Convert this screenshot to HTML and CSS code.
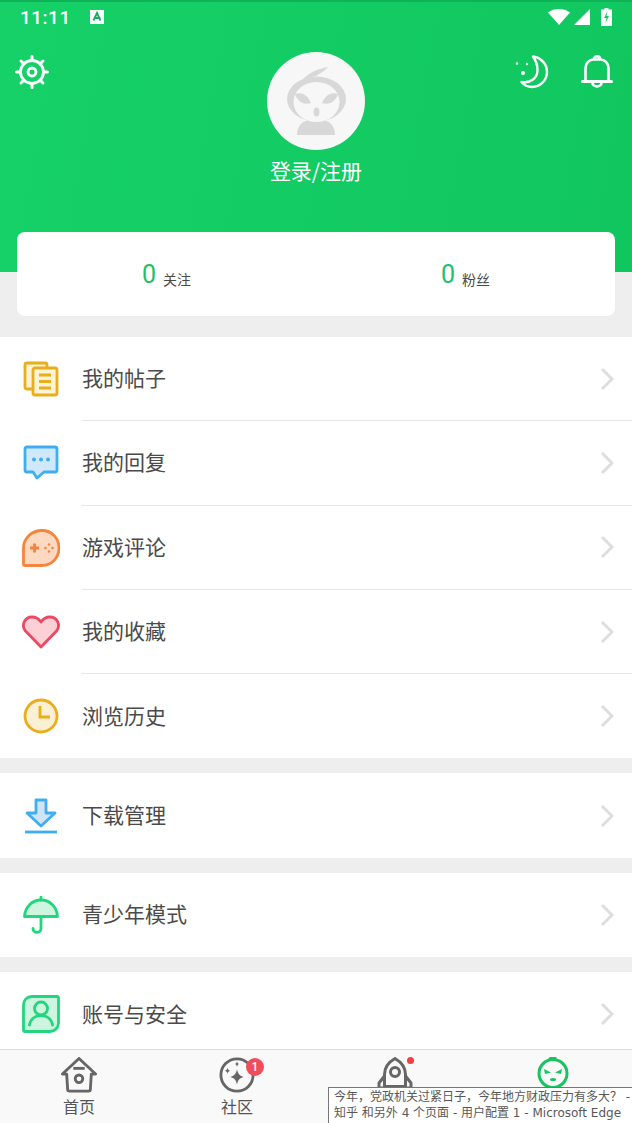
FILE: index.html
```html
<!DOCTYPE html>
<html lang="zh">
<head>
	<meta charset="utf-8">
	<title>我的</title>
	<link rel="stylesheet" href="styles.css">
</head>
<body>
	<div class="phone">
		<div class="scroll">
			<div class="top">
				<div class="status">
					<span class="time">11:11</span>
					<svg class="status-a" width="14" height="14" viewBox="0 0 14 14"><rect width="14" height="14" fill="#fff"/><path d="M3.500 10.500 7 3l3.500 7.500M5 8h4" fill="none" stroke="#18a860" stroke-width="1.800"/></svg>
					<span class="status-gap"></span>
					<svg width="22" height="16" viewBox="0 0 22 16"><path d="M0 3.500C3 1 7 0 11 0s8 1 11 3.500L11 16z" fill="#fff"/></svg>
					<svg class="status-signal" width="16" height="16" viewBox="0 0 16 16"><path d="M16 0v16H0z" fill="#fff"/></svg>
					<svg class="status-batt" width="11" height="18" viewBox="0 0 11 18"><path d="M3.500 0h4v1.500H11V18H0V1.500h3.500z" fill="#fff"/><path d="M6.500 3 3 10h2.500L4.500 15 8 8H5.500z" fill="#15cc63"/></svg>
				</div>
				<div class="tools">
					<svg class="gear" width="34" height="34" viewBox="0 0 34 34" fill="none" stroke="#fff">
						<circle cx="17" cy="17" r="11.500" stroke-width="2.800"/>
						<circle cx="17" cy="17" r="4" stroke-width="2.800"/>
						<path d="M17 1.500v4M17 28.500v4M1.500 17h4M28.500 17h4M6 6l3 3M25 25l3 3M28 6l-3 3M9 25l-3 3" stroke-width="3" stroke-linecap="round"/>
					</svg>
					<div class="tools-right">
						<svg width="34" height="34" viewBox="0 0 34 34" fill="none" stroke="#fff" stroke-width="2.400">
							<path d="M18 1.500c8 1 14 7.500 14 15.500 0 8.500-7 15-15 15-4.500 0-8-2-10.500-5 9.500 1.500 16-4 16-12 0-5-2-10-4.500-13.500z" stroke-linejoin="round"/>
							<circle cx="8" cy="18" r="2" fill="#fff" stroke="none"/>
							<circle cx="2" cy="8.500" r="1.200" fill="#fff" stroke="none"/>
							<circle cx="12" cy="9" r="1.200" fill="#fff" stroke="none"/>
						</svg>
						<svg width="32" height="34" viewBox="0 0 32 34" fill="none" stroke="#fff" stroke-width="2.600">
							<path d="M4.500 26V13c0-5 4-8.500 8-8.500h7c4 0 8 3.500 8 8.500v13"/>
							<path d="M1.500 26.500h29" stroke-width="3" stroke-linecap="round"/>
							<path d="M13 4c0-3.500 6-3.500 6 0M11.500 28c0 4.500 9 4.500 9 0"/>
						</svg>
					</div>
				</div>
				<div class="avatar">
					<svg width="98" height="98" viewBox="0 0 98 98">
						<circle cx="49" cy="49" r="49" fill="#f7f7f8"/>
						<path d="M30 83c0-8 4-13 11-15h16c7 2 11 7 11 15z" fill="#d8d8d8"/>
						<ellipse cx="49.500" cy="47" rx="29.500" ry="22.500" fill="#d8d8d8"/>
						<path d="M36 27c6-6 14-10 25-12-3 4-8 6-12 9z" fill="#d8d8d8"/>
						<ellipse cx="49.500" cy="50" rx="23" ry="20" fill="#f7f7f8"/>
						<path d="M28 42c6-2 12 0 16 9-6 2-13 0-16-9zM71 42c-6-2-12 0-16 9 6 2 13 0 16-9z" fill="#d8d8d8"/>
						<ellipse cx="49.500" cy="60" rx="3" ry="4.500" fill="#d8d8d8"/>
					</svg>
				</div>
				<div class="login">登录/注册</div>
			</div>
			<div class="stats-wrap">
				<div class="stats">
					<div class="stat"><span class="stat-num">0</span><span class="stat-label">关注</span></div>
					<div class="stat"><span class="stat-num">0</span><span class="stat-label">粉丝</span></div>
				</div>
			</div>

			<div class="group">
				<div class="row">
					<svg class="ico" width="36" height="36" viewBox="0 0 36 36" fill="none" stroke="#e8ae1c" stroke-width="2.800" stroke-linejoin="round">
						<rect x="2" y="2" width="22" height="26" rx="2" fill="#fdf3d6"/>
						<rect x="10" y="7" width="24" height="27" rx="2" fill="#fdf3d6"/>
						<path d="M16 14h12M16 20.500h12M16 27h12"/>
					</svg>
					<div class="row-body"><span>我的帖子</span><svg class="arrow" width="14" height="24" viewBox="0 0 14 24"><path d="M2 2l10 10L2 22" fill="none" stroke="#dedede" stroke-width="3"/></svg></div>
				</div>
				<div class="row">
					<svg class="ico" width="36" height="36" viewBox="0 0 36 36" fill="none" stroke="#3eaef0" stroke-width="2.800" stroke-linejoin="round">
						<path d="M4 2h28a2 2 0 0 1 2 2v21a2 2 0 0 1-2 2H21l-7 6-4-6H4a2 2 0 0 1-2-2V4a2 2 0 0 1 2-2z" fill="#cfe9fa"/>
						<circle cx="11" cy="14.500" r="2" fill="#3eaef0" stroke="none"/>
						<circle cx="18" cy="14.500" r="2" fill="#3eaef0" stroke="none"/>
						<circle cx="25" cy="14.500" r="2" fill="#3eaef0" stroke="none"/>
					</svg>
					<div class="row-body"><span>我的回复</span><svg class="arrow" width="14" height="24" viewBox="0 0 14 24"><path d="M2 2l10 10L2 22" fill="none" stroke="#dedede" stroke-width="3"/></svg></div>
				</div>
				<div class="row">
					<svg class="ico" width="38" height="38" viewBox="0 0 38 38" fill="none" stroke="#f5843c" stroke-width="2.800" stroke-linejoin="round">
						<path d="M20 1.500c9.500 0 17 7.500 17 17.500s-7.500 17.500-17 17.500H3c-1 0-1.500-.5-1.500-1.500V19C1.500 9 10 1.500 20 1.500z" fill="#fcd9c0"/>
						<path d="M8 19h9M12.500 14.500v9" stroke-width="2.800"/>
						<circle cx="27" cy="15.500" r="1.300" fill="#f5843c" stroke="none"/>
						<circle cx="27" cy="22.500" r="1.300" fill="#f5843c" stroke="none"/>
						<circle cx="23.500" cy="19" r="1.300" fill="#f5843c" stroke="none"/>
						<circle cx="30.500" cy="19" r="1.300" fill="#f5843c" stroke="none"/>
					</svg>
					<div class="row-body"><span>游戏评论</span><svg class="arrow" width="14" height="24" viewBox="0 0 14 24"><path d="M2 2l10 10L2 22" fill="none" stroke="#dedede" stroke-width="3"/></svg></div>
				</div>
				<div class="row">
					<svg class="ico" width="38" height="34" viewBox="0 0 38 34" fill="none" stroke="#ec4a63" stroke-width="2.800" stroke-linejoin="round">
						<path d="M19 32 3.500 16C-1 10.500 2.500 2 10 2c4 0 7 2 9 5 2-3 5-5 9-5 7.500 0 11 8.500 6.500 14z" fill="#fdd0d6"/>
					</svg>
					<div class="row-body"><span>我的收藏</span><svg class="arrow" width="14" height="24" viewBox="0 0 14 24"><path d="M2 2l10 10L2 22" fill="none" stroke="#dedede" stroke-width="3"/></svg></div>
				</div>
				<div class="row">
					<svg class="ico" width="36" height="36" viewBox="0 0 36 36" fill="none" stroke="#e8ae1c" stroke-width="2.800">
						<circle cx="18" cy="18" r="16" fill="#fcf0d4"/>
						<path d="M17 8v11h10"/>
					</svg>
					<div class="row-body row-body-last"><span>浏览历史</span><svg class="arrow" width="14" height="24" viewBox="0 0 14 24"><path d="M2 2l10 10L2 22" fill="none" stroke="#dedede" stroke-width="3"/></svg></div>
				</div>
			</div>

			<div class="group">
				<div class="row">
					<svg class="ico" width="36" height="36" viewBox="0 0 36 36" fill="none" stroke="#3eaef0" stroke-width="2.800" stroke-linejoin="round">
						<path d="M13 2h10v13h9L18 28 4 15h9z" fill="#cfe5f7"/>
						<path d="M2 34h32"/>
					</svg>
					<div class="row-body row-body-last"><span>下载管理</span><svg class="arrow" width="14" height="24" viewBox="0 0 14 24"><path d="M2 2l10 10L2 22" fill="none" stroke="#dedede" stroke-width="3"/></svg></div>
				</div>
			</div>

			<div class="group">
				<div class="row">
					<svg class="ico" width="36" height="38" viewBox="0 0 36 38" fill="none" stroke="#22d67e" stroke-width="2.800" stroke-linejoin="round">
						<path d="M18 4C9 4 2 11 1.500 20.500h33C34 11 27 4 18 4z" fill="#cdf5e0"/>
						<path d="M18 1v3M18 20.500v12c0 5-8 5-8 0" stroke-linecap="round"/>
					</svg>
					<div class="row-body row-body-last"><span>青少年模式</span><svg class="arrow" width="14" height="24" viewBox="0 0 14 24"><path d="M2 2l10 10L2 22" fill="none" stroke="#dedede" stroke-width="3"/></svg></div>
				</div>
			</div>

			<div class="group">
				<div class="row">
					<svg class="ico" width="38" height="38" viewBox="0 0 38 38" fill="none" stroke="#22d67e" stroke-width="2.800" stroke-linejoin="round">
						<path d="M10 1.500h25a1.500 1.500 0 0 1 1.500 1.500v25c0 5-4 8.500-8.500 8.500H3A1.500 1.500 0 0 1 1.500 35V10C1.500 5 5 1.500 10 1.500z" fill="#cdf5e0"/>
						<circle cx="19" cy="13.500" r="6.500"/>
						<path d="M7.500 30c1-6 5.500-9.500 11.500-9.500S29.500 24 30.500 30" stroke-linecap="round"/>
					</svg>
					<div class="row-body row-body-last"><span>账号与安全</span><svg class="arrow" width="14" height="24" viewBox="0 0 14 24"><path d="M2 2l10 10L2 22" fill="none" stroke="#dedede" stroke-width="3"/></svg></div>
				</div>
			</div>
		</div>

		<div class="tabs">
			<div class="tab">
				<svg class="tab-svg" width="38" height="36" viewBox="0 0 38 38" fill="none" stroke="#666" stroke-width="3" stroke-linejoin="round">
					<path d="M1.500 18 19 1.500 36.500 18H32l-1 16c0 1-.5 2-2 2H9c-1.500 0-2-1-2-2L6 18z"/>
					<path d="M13 12h12"/>
					<circle cx="19" cy="23" r="4"/>
				</svg>
				<span>首页</span>
			</div>
			<div class="tab">
				<div class="tab-icon">
					<svg class="tab-svg" width="36" height="36" viewBox="0 0 38 38" fill="none" stroke="#666" stroke-width="3">
						<circle cx="19" cy="19" r="17"/>
						<path d="M19 13c1 5 3 7 7 8-4 1-6 3-7 8-1-5-3-7-7-8 4-1 6-3 7-8zM9 11c.5 2.500 1 3 3 3.500-2 .5-2.500 1-3 3.500-.5-2.500-1-3-3-3.500 2-.5 2.500-1 3-3.500zM19 4.500c.4 2 1 2.600 2.500 3-1.500.4-2.100 1-2.500 3-.4-2-1-2.600-2.500-3 1.500-.4 2.100-1 2.500-3z" fill="#666" stroke="none"/>
					</svg>
					<b class="badge">1</b>
				</div>
				<span>社区</span>
			</div>
			<div class="tab">
				<div class="tab-icon">
					<svg class="tab-svg" width="36" height="38" viewBox="0 0 36 38" fill="none" stroke="#666" stroke-width="3" stroke-linejoin="round">
						<path d="M18 1.500c7 4 10.500 10 10.500 16v12h-21v-12c0-6 3.500-12 10.500-16z"/>
						<path d="M7.500 19 2 26v5h5.500M28.500 19l5.500 7v5h-5.500"/>
						<circle cx="18" cy="15" r="4.500"/>
					</svg>
					<i class="dot"></i>
				</div>
			</div>
			<div class="tab">
				<svg class="tab-svg" width="32" height="36" viewBox="0 0 32 36" fill="none" stroke="#16c460" stroke-width="3">
					<circle cx="16" cy="16.500" r="14"/>
					<path d="M13 2c1-1.500 3-2 5-1.500" stroke-linecap="round"/>
					<path d="M7 12l7 3.500-6 1.500zM25 12l-7 3.500 6 1.500z" fill="#16c460" stroke="none"/>
					<ellipse cx="16" cy="22.500" rx="3" ry="1.500" fill="#16c460" stroke="none"/>
				</svg>
			</div>
		</div>

		<div class="tip">今年，党政机关过紧日子，今年地方财政压力有多大？ -<br>知乎 和另外 4 个页面 - 用户配置 1 - Microsoft Edge</div>
	</div>
</body>
</html>
```

FILE: styles.css
```css
* {
	box-sizing: border-box;
}

html, body {
	margin: 0;
	height: 100%;
}

body {
	font-family: "Noto Sans CJK SC", "Noto Sans", sans-serif;
	color: #4a4a4a;
	background-color: #eee;
}

.phone {
	position: relative;
	display: flex;
	flex-direction: column;
	height: 1123px;
	overflow: hidden;
}

.scroll {
	flex: 1;
	min-height: 0;
	overflow: hidden;
}

.top {
	height: 272px;
	padding: 0 17px;
	background: linear-gradient(100deg, #16d168, #11c65f);
	border-top: 2px solid #10b257;
	color: #fff;
}

.status {
	display: flex;
	align-items: center;
	height: 30px;
	margin: 0 3px 0 3px;
}

.time {
	font-family: "Roboto", sans-serif;
	font-size: 19px;
	font-weight: 500;
	letter-spacing: .5px;
}

.status-a {
	margin-left: 19px;
}

.status-gap {
	flex: 1;
}

.status-signal {
	margin-left: 4px;
}

.status-batt {
	margin-left: 11px;
}

.tools {
	display: flex;
	justify-content: space-between;
	margin: 23px 2px 0 -2px;
}

.tools-right {
	display: flex;
	gap: 32px;
}

.avatar {
	display: flex;
	justify-content: center;
	height: 98px;
	margin-top: -37px;
}

.login {
	margin-top: 5px;
	font-size: 21px;
	line-height: 30px;
	text-align: center;
}

.stats-wrap {
	display: flow-root;
	height: 65px;
	padding: 0 17px;
	background-color: #eee;
}

.stats {
	position: relative;
	display: flex;
	height: 84px;
	margin-top: -40px;
	background-color: #fff;
	border-radius: 8px;
}

.stat {
	flex: 1;
	display: flex;
	justify-content: center;
	align-items: baseline;
	gap: 7px;
	padding-top: 28px;
}

.stat-num {
	font-family: "Roboto", sans-serif;
	font-size: 25px;
	color: #1ec06b;
}

.stat-label {
	position: relative;
	top: 2px;
	font-size: 14px;
	color: #4a4a4a;
}

.group {
	margin-bottom: 15px;
	background-color: #fff;
}

.row {
	display: flex;
	align-items: center;
	height: 84.300px;
}

.ico {
	flex: none;
	width: 38px;
	margin-left: 22px;
}

.row-body {
	flex: 1;
	display: flex;
	align-items: center;
	justify-content: space-between;
	height: 100%;
	margin-left: 22px;
	padding-right: 18px;
	font-size: 21px;
	border-bottom: 1px solid #e6e6e6;
}

.row-body span {
	margin-top: -3px;
}

.row-body-last {
	border-bottom: 0;
}

.tabs {
	display: flex;
	flex: none;
	height: 74px;
	padding-top: 7px;
	background-color: #f9f9f9;
	border-top: 1px solid #ddd;
}

.tab {
	flex: 1;
	display: flex;
	flex-direction: column;
	align-items: center;
	font-size: 16px;
	line-height: 24px;
	color: #555;
}

.tab-svg {
	display: block;
	margin-bottom: 1px;
}

.tab-icon {
	position: relative;
}

.badge {
	position: absolute;
	top: 1px;
	right: -9px;
	width: 18px;
	height: 18px;
	border-radius: 50%;
	background-color: #f04d5c;
	color: #fff;
	font-family: "Roboto", sans-serif;
	font-size: 12px;
	font-weight: 500;
	line-height: 18px;
	text-align: center;
}

.dot {
	position: absolute;
	top: 0;
	right: -1px;
	width: 7px;
	height: 7px;
	border-radius: 50%;
	background-color: #f04040;
}

.tip {
	position: absolute;
	right: 0;
	bottom: 0;
	width: 304px;
	height: 36px;
	padding: 1px 0 0 5px;
	background-color: #fff;
	border: 1px solid #767676;
	border-width: 1px 0 0 1px;
	font-family: "DejaVu Sans", "Noto Sans CJK SC", sans-serif;
	font-size: 12px;
	line-height: 16px;
	white-space: nowrap;
	color: #575757;
}
```
